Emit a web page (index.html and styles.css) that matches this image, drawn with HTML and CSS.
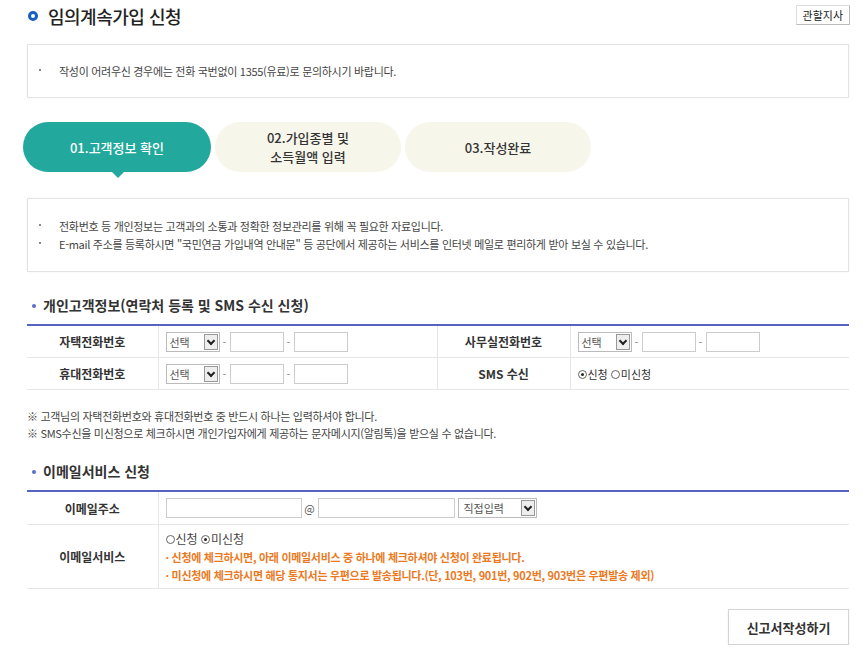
FILE: index.html
```html
<!DOCTYPE html>
<html lang="ko">
<head>
    <meta charset="UTF-8">
    <title>임의계속가입 신청</title>
    <link rel="stylesheet" href="styles.css">
</head>
<body>
    <div class="page">
        <!-- 제목 -->
        <div class="page-head">
            <h2 class="page-title"><span class="title-dot"></span>임의계속가입 신청</h2>
            <button class="btn-branch">관할지사</button>
        </div>

        <div class="info-box info-top">
            <ul>
                <li>작성이 어려우신 경우에는 전화 국번없이 1355(유료)로 문의하시기 바랍니다.</li>
            </ul>
        </div>

        <!-- 단계 표시 -->
        <div class="steps">
            <div class="step on">01.고객정보 확인</div>
            <div class="step">02.가입종별 및<br>소득월액 입력</div>
            <div class="step">03.작성완료</div>
        </div>

        <div class="info-box info-mid">
            <ul>
                <li>전화번호 등 개인정보는 고객과의 소통과 정확한 정보관리를 위해 꼭 필요한 자료입니다.</li>
                <li>E-mail 주소를 등록하시면 "국민연금 가입내역 안내문" 등 공단에서 제공하는 서비스를 인터넷 메일로 편리하게 받아 보실 수 있습니다.</li>
            </ul>
        </div>

        <h3 class="sec-title">개인고객정보(연락처 등록 및 SMS 수신 신청)</h3>
        <table class="form-table">
            <colgroup>
                <col style="width:131px">
                <col style="width:279px">
                <col style="width:133px">
                <col>
            </colgroup>
            <tr>
                <th>자택전화번호</th>
                <td>
                    <span class="sel">선택<i class="arr"></i></span><span class="dash">-</span><span class="inp"></span><span class="dash">-</span><span class="inp"></span>
                </td>
                <th>사무실전화번호</th>
                <td>
                    <span class="sel">선택<i class="arr"></i></span><span class="dash">-</span><span class="inp"></span><span class="dash">-</span><span class="inp"></span>
                </td>
            </tr>
            <tr>
                <th>휴대전화번호</th>
                <td>
                    <span class="sel">선택<i class="arr"></i></span><span class="dash">-</span><span class="inp"></span><span class="dash">-</span><span class="inp"></span>
                </td>
                <th>SMS 수신</th>
                <td class="radios"><span class="radio checked"></span>신청 <span class="radio"></span>미신청</td>
            </tr>
        </table>

        <p class="notes">※ 고객님의 자택전화번호와 휴대전화번호 중 반드시 하나는 입력하셔야 합니다.<br>※ SMS수신을 미신청으로 체크하시면 개인가입자에게 제공하는 문자메시지(알림톡)을 받으실 수 없습니다.</p>

        <h3 class="sec-title sec-mail">이메일서비스 신청</h3>
        <table class="form-table">
            <colgroup>
                <col style="width:131px">
                <col>
            </colgroup>
            <tr class="row-mail">
                <th>이메일주소</th>
                <td>
                    <span class="inp inp-mail"></span><span class="at">@</span><span class="inp inp-domain"></span><span class="sel sel-mail">직접입력<i class="arr"></i></span>
                </td>
            </tr>
            <tr class="row-service">
                <th>이메일서비스</th>
                <td>
                    <div class="radios"><span class="radio"></span>신청 <span class="radio checked"></span>미신청</div>
                    <p class="warn">· 신청에 체크하시면, 아래 이메일서비스 중 하나에 체크하셔야 신청이 완료됩니다.</p>
                    <p class="warn">· 미신청에 체크하시면 해당 통지서는 우편으로 발송됩니다.(단, 103번, 901번, 902번, 903번은 우편발송 제외)</p>
                </td>
            </tr>
        </table>

        <div class="btn-area">
            <button class="btn-write">신고서작성하기</button>
        </div>
    </div>
</body>
</html>
```

FILE: styles.css
```css
body {
    margin: 0;
    font-family: "Noto Sans CJK KR", "Noto Sans", sans-serif;
    color: #333;
    background: #fff;
}
.page {
    width: 822px;
    padding: 0 19px 0 27px;
}

/* 제목 영역 */
.page-head {
    display: flex;
    justify-content: space-between;
    align-items: flex-start;
    height: 44px;
}
.page-title {
    margin: 3px 0 0 0;
    display: flex;
    align-items: center;
    font-size: 18px;
    font-weight: 500;
    color: #222;
    letter-spacing: -0.5px;
}
.title-dot {
    width: 4px;
    height: 4px;
    border: 3px solid #1560c0;
    border-radius: 50%;
    margin: 0 10px 0 1px;
}
.btn-branch {
    margin: 5px -1px 0 0;
    height: 20px;
    padding: 0 6px;
    font-family: inherit;
    font-size: 11px;
    color: #222;
    background: #fff;
    border: 1px solid #ddd;
    border-right-color: #bbb;
    border-bottom-color: #bbb;
    line-height: 18px;
}

/* 안내 박스 */
.info-box {
    border: 1px solid #e3e3e3;
    box-shadow: 0 0 2px rgba(0, 0, 0, 0.05);
}
.info-box ul {
    margin: 0;
    padding: 0;
    list-style: none;
}
.info-box li {
    position: relative;
    padding-left: 31px;
    font-size: 11px;
    line-height: 18px;
    color: #444;
    letter-spacing: -0.3px;
}
.info-box li::before {
    content: "";
    position: absolute;
    left: 11px;
    top: 7px;
    width: 2px;
    height: 2px;
    background: #888;
}
.info-top {
    height: 52px;
    display: flex;
    align-items: center;
}
.info-mid {
    height: 72px;
    display: flex;
    align-items: center;
    margin-top: 26px;
}

/* 단계 */
.steps {
    display: flex;
    gap: 4px;
    margin-top: 24px;
    margin-left: -4px;
}
.step {
    position: relative;
    width: 186px;
    height: 50px;
    border-radius: 25px;
    background: #f7f6ea;
    color: #333;
    font-size: 13px;
    font-weight: 500;
    line-height: 19px;
    display: flex;
    align-items: center;
    justify-content: center;
    text-align: center;
}
.step.on {
    width: 188px;
    background: #22a89c;
    color: #fff;
}
.step.on::after {
    content: "";
    position: absolute;
    left: 88px;
    bottom: -6px;
    border-left: 7px solid transparent;
    border-right: 7px solid transparent;
    border-top: 7px solid #22a89c;
}

/* 섹션 제목 */
.sec-title {
    position: relative;
    margin: 24px 0 10px 0;
    padding-left: 16px;
    font-size: 14px;
    font-weight: bold;
    color: #333;
    line-height: 18px;
}
.sec-title::before {
    content: "";
    position: absolute;
    left: 5px;
    top: 8px;
    width: 4px;
    height: 4px;
    border-radius: 50%;
    background: #5a6fc8;
}
.sec-mail {
    margin-top: 20px;
}

/* 입력 테이블 */
.form-table {
    width: 100%;
    border-collapse: collapse;
    table-layout: fixed;
    border-top: 2px solid #5563c1;
    border-bottom: 1px solid #ddd;
}
.form-table th,
.form-table td {
    border-bottom: 1px solid #e6e6e6;
    height: 31px;
    padding: 0;
    font-size: 11px;
}
.form-table th {
    font-size: 12px;
    font-weight: bold;
    color: #333;
    text-align: center;
    border-right: 1px solid #e6e6e6;
}
.form-table td {
    padding-left: 7px;
    color: #333;
    border-right: 1px solid #e6e6e6;
}
.form-table td:last-child {
    border-right: none;
}
.sel,
.inp {
    display: inline-block;
    vertical-align: middle;
    box-sizing: border-box;
    height: 20px;
    border: 1px solid #bbb;
    background: #fff;
}
.sel {
    position: relative;
    width: 54px;
    padding-left: 3px;
    font-size: 11px;
    line-height: 18px;
    color: #555;
}
.arr {
    position: absolute;
    right: 1px;
    top: 1px;
    width: 14px;
    height: 16px;
    box-sizing: border-box;
    border: 1px solid #999;
    background: #eee;
}
.arr::after {
    content: "";
    position: absolute;
    left: 3px;
    top: 3px;
    width: 4px;
    height: 4px;
    border-right: 2px solid #222;
    border-bottom: 2px solid #222;
    transform: rotate(45deg);
}
.inp {
    width: 54px;
    border-color: #ccc;
}
.dash {
    display: inline-block;
    width: 10px;
    text-align: center;
    color: #888;
    vertical-align: middle;
}
.radios {
    font-size: 12px;
    color: #444;
}
.radio {
    display: inline-block;
    width: 7px;
    height: 7px;
    border: 1px solid #666;
    border-radius: 50%;
    margin-right: 1px;
    position: relative;
    top: 0;
}
.radio.checked::after {
    content: "";
    position: absolute;
    left: 2px;
    top: 2px;
    width: 3px;
    height: 3px;
    border-radius: 50%;
    background: #222;
}
.inp-mail {
    width: 136px;
}
.inp-domain {
    width: 137px;
}
.at {
    display: inline-block;
    width: 16px;
    text-align: center;
    font-size: 11px;
    color: #555;
    vertical-align: middle;
}
.sel-mail {
    width: 79px;
    margin-left: 3px;
    padding-left: 5px;
}
.row-mail th,
.row-mail td {
    height: 32px;
}
.row-service th,
.row-service td {
    height: 63px;
}
.row-service .radios {
    margin-bottom: 1px;
}
.warn {
    margin: 0;
    font-size: 11px;
    font-weight: bold;
    color: #ea7a1f;
    line-height: 18px;
    letter-spacing: -0.3px;
}

/* 안내 문구 */
.notes {
    margin: 18px 0 0 0;
    font-size: 11px;
    line-height: 17px;
    color: #444;
    letter-spacing: -0.3px;
}

/* 하단 버튼 */
.btn-area {
    display: flex;
    justify-content: flex-end;
    margin-top: 20px;
}
.btn-write {
    width: 121px;
    height: 36px;
    font-family: inherit;
    font-size: 13px;
    font-weight: bold;
    color: #333;
    background: #fff;
    border: 1px solid #d4d4d4;
    box-shadow: 0 1px 2px rgba(0, 0, 0, 0.08);
}
```
